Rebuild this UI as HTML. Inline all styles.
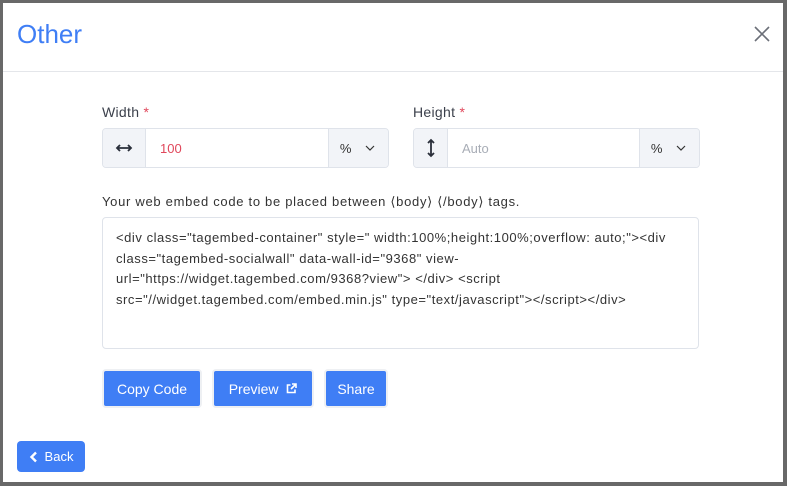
<!DOCTYPE html>
<html><head><style>
*{box-sizing:border-box;margin:0;padding:0}
body{width:787px;height:486px;background:#686868;font-family:"Liberation Sans",sans-serif;position:relative;overflow:hidden}
.m{position:absolute;left:3px;top:3px;width:780px;height:479px;background:#fff}
.ab{position:absolute}
.t{left:14px;top:16px;font-size:26px;color:#3f7ef5}
.hr{left:0;top:68px;width:780px;height:1px;background:#e4e6ea}
.lbl{font-size:14px;color:#3a3f4a;letter-spacing:0.3px}
.lbl span{color:#e0475b}
.grp{height:40px;border:1px solid #dfe3ea;border-radius:4px;display:flex;overflow:hidden}
.ic{background:#f2f4f8;border-right:1px solid #dfe3ea;display:flex;align-items:center;justify-content:center}
.in{flex:1;display:flex;align-items:center;padding-left:14px;font-size:13px}
.dd{background:#f2f4f8;border-left:1px solid #dfe3ea;width:60px;display:flex;align-items:center;justify-content:space-around;font-size:13px;color:#333;padding:0 6px 0 4px}
.ta{left:99px;top:214px;width:597px;height:132px;border:1px solid #dfe3ea;border-radius:4px;padding:10px 13px;font-size:13px;line-height:20.5px;color:#333;white-space:nowrap;letter-spacing:0.55px}
.btn{background:#3f7ef5;color:#fff;font-size:14px;border:2px solid #eef0f3;border-radius:4px;display:flex;align-items:center;justify-content:center;height:39px;top:366px}
</style></head><body><div class="m">
<div class="ab t">Other</div>
<svg class="ab" style="left:750px;top:22px" width="18" height="18" viewBox="0 0 18 18"><path d="M2 2L16 16M16 2L2 16" stroke="#6b6f78" stroke-width="1.6"/></svg>
<div class="ab hr"></div>
<div class="ab lbl" style="left:99px;top:101px">Width <span>*</span></div>
<div class="ab lbl" style="left:410px;top:101px">Height <span>*</span></div>
<div class="ab grp" style="left:99px;top:125px;width:287px">
<div class="ic" style="width:43px"><svg width="18" height="10" viewBox="0 0 18 10"><path d="M2 5H16M5 2L2 5L5 8M13 2L16 5L13 8" stroke="#2a2f3a" stroke-width="1.8" fill="none"/></svg></div>
<div class="in" style="color:#e0475b">100</div>
<div class="dd"><span>%</span><svg width="10" height="6" viewBox="0 0 10 6"><path d="M1 1L5 5L9 1" stroke="#333" stroke-width="1.2" fill="none"/></svg></div></div>
<div class="ab grp" style="left:410px;top:125px;width:287px">
<div class="ic" style="width:34px"><svg width="10" height="20" viewBox="0 0 10 20"><path d="M5 2V18M2 5L5 2L8 5M2 15L5 18L8 15" stroke="#2a2f3a" stroke-width="1.8" fill="none"/></svg></div>
<div class="in" style="color:#a8adb6">Auto</div>
<div class="dd"><span>%</span><svg width="10" height="6" viewBox="0 0 10 6"><path d="M1 1L5 5L9 1" stroke="#333" stroke-width="1.2" fill="none"/></svg></div></div>
<div class="ab" style="left:99px;top:191px;font-size:13px;color:#333;letter-spacing:0.7px">Your web embed code to be placed between ⟨body⟩ ⟨/body⟩ tags.</div>
<div class="ab ta">&lt;div class="tagembed-container" style=" width:100%;height:100%;overflow: auto;"&gt;&lt;div<br>class="tagembed-socialwall" data-wall-id="9368" view-<br>url="https://widget.tagembed.com/9368?view"&gt; &lt;/div&gt; &lt;script<br>src="//widget.tagembed.com/embed.min.js" type="text/javascript"&gt;&lt;/script&gt;&lt;/div&gt;</div>
<div class="ab btn" style="left:99px;width:100px">Copy Code</div>
<div class="ab btn" style="left:209px;width:102px">Preview&nbsp;&nbsp;<svg width="11" height="11" viewBox="0 0 11 11"><path d="M4.5 2H1.5V9.5H9V6.5M6 1H10V5M10 1L5 6" stroke="#fff" stroke-width="1.6" fill="none"/></svg></div>
<div class="ab btn" style="left:321px;width:64px">Share</div>
<div class="ab btn" style="left:14px;top:438px;width:68px;height:31px;border:none;font-size:13px"><svg width="9" height="12" viewBox="0 0 9 12" style="margin-right:7px"><path d="M7 1.5L2.5 6L7 10.5" stroke="#fff" stroke-width="2.4" fill="none"/></svg>Back</div>
</div></body></html>
